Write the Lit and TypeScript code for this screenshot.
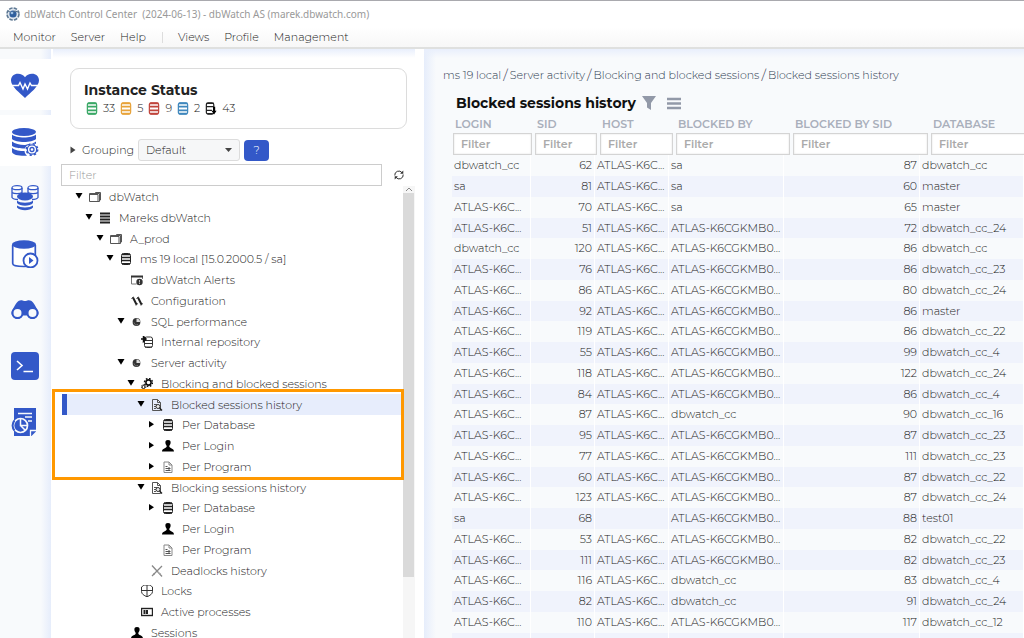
import { LitElement, html, css, svg, nothing } from "lit";
import { customElement, property } from "lit/decorators.js";
import { classMap } from "lit/directives/class-map.js";
import { styleMap } from "lit/directives/style-map.js";

type TreeNode = { depth: number; label: string; icon: string; open?: boolean; closed?: boolean; selected?: boolean };

const TREE: TreeNode[] = [
  { depth: 0, label: "dbWatch", icon: "folder", open: true },
  { depth: 1, label: "Mareks dbWatch", icon: "stack", open: true },
  { depth: 2, label: "A_prod", icon: "folder", open: true },
  { depth: 3, label: "ms 19 local [15.0.2000.5 / sa]", icon: "db", open: true },
  { depth: 4, label: "dbWatch Alerts", icon: "alert" },
  { depth: 4, label: "Configuration", icon: "tools" },
  { depth: 4, label: "SQL performance", icon: "dot", open: true },
  { depth: 5, label: "Internal repository", icon: "repo" },
  { depth: 4, label: "Server activity", icon: "dot", open: true },
  { depth: 5, label: "Blocking and blocked sessions", icon: "gears", open: true },
  { depth: 6, label: "Blocked sessions history", icon: "search", open: true, selected: true },
  { depth: 7, label: "Per Database", icon: "db", closed: true },
  { depth: 7, label: "Per Login", icon: "user", closed: true },
  { depth: 7, label: "Per Program", icon: "doc", closed: true },
  { depth: 6, label: "Blocking sessions history", icon: "search", open: true },
  { depth: 7, label: "Per Database", icon: "db", closed: true },
  { depth: 7, label: "Per Login", icon: "user" },
  { depth: 7, label: "Per Program", icon: "doc" },
  { depth: 6, label: "Deadlocks history", icon: "cross" },
  { depth: 5, label: "Locks", icon: "shield" },
  { depth: 5, label: "Active processes", icon: "process" },
  { depth: 4, label: "Sessions", icon: "user" },
];

const A = "ATLAS-K6C...";
const B = "ATLAS-K6CGKMB0...";
const COLUMNS = ["LOGIN", "SID", "HOST", "BLOCKED BY", "BLOCKED BY SID", "DATABASE"];
const ROWS: [string, number, string, string, number, string][] = [
  ["dbwatch_cc", 62, A, "sa", 87, "dbwatch_cc"],
  ["sa", 81, A, "sa", 60, "master"],
  [A, 70, A, "sa", 65, "master"],
  [A, 51, A, B, 72, "dbwatch_cc_24"],
  ["dbwatch_cc", 120, A, B, 86, "dbwatch_cc"],
  [A, 76, A, B, 86, "dbwatch_cc_23"],
  [A, 86, A, B, 80, "dbwatch_cc_24"],
  [A, 92, A, B, 86, "master"],
  [A, 119, A, B, 86, "dbwatch_cc_22"],
  [A, 55, A, B, 99, "dbwatch_cc_4"],
  [A, 118, A, B, 122, "dbwatch_cc_24"],
  [A, 84, A, B, 86, "dbwatch_cc_4"],
  [A, 87, A, "dbwatch_cc", 90, "dbwatch_cc_16"],
  [A, 95, A, B, 87, "dbwatch_cc_23"],
  [A, 77, A, B, 111, "dbwatch_cc_23"],
  [A, 60, A, B, 87, "dbwatch_cc_22"],
  [A, 123, A, B, 87, "dbwatch_cc_24"],
  ["sa", 68, "", B, 88, "test01"],
  [A, 53, A, B, 82, "dbwatch_cc_22"],
  [A, 111, A, B, 82, "dbwatch_cc_23"],
  [A, 116, A, "dbwatch_cc", 83, "dbwatch_cc_4"],
  [A, 82, A, "dbwatch_cc", 91, "dbwatch_cc_24"],
  [A, 110, A, B, 117, "dbwatch_cc_12"],
];

const STATUS: [string, string, string][] = [
  ["Healthy", "#3aa866", "33"],
  ["Warning", "#e8a33a", "5"],
  ["Alarm", "#c0453c", "9"],
  ["Information", "#3f87bd", "2"],
];

/* Small tree glyphs, drawn on a 12 x 12 grid. */
const GLYPHS: Record<string, unknown> = {
  folder: svg`<path d="M.5 2.500h10v8h-10z M.5 3.500h8.500v7 M6.500 2.500v-1h5v7.500h-1" fill="none" stroke="#555"/>`,
  stack: svg`<path d="M1 1.500h10M1 4.500h10M1 7.500h10M1 10.500h10" stroke="#222" stroke-width="2"/>`,
  db: svg`<rect x="1.500" y=".5" width="9" height="11" rx="2" fill="#fff" stroke="#222"/><path d="M2 1.500h8M1.500 4.500h9M1.500 7.500h9M2 10.700h8" stroke="#222" stroke-width="1.400"/>`,
  alert: svg`<path d="M.5 10V2.500h11V5M.5 10h5" fill="none" stroke="#777"/><path d="M0 2.500h12" stroke="#333" stroke-width="2"/><circle cx="8.500" cy="8" r="3.200" fill="#333"/><path d="M8.500 6v2.500M8.500 9v1" stroke="#bbb"/>`,
  tools: svg`<path d="M2 2.500l3.500 7M7 2.500l3.500 7" stroke="#222" stroke-width="2"/><path d="M.5 3.500l2-1.500M5.500 3.500l2-1.500M5 10.500l1.500-2M10 10.500l1.500-2" stroke="#222"/>`,
  dot: svg`<circle cx="5.500" cy="6" r="3.900" fill="#333"/><path d="M5.500 6V2.500A3.500 3.500 0 0 1 9 6z" fill="#ddd"/><path d="M3 6.500a3 3 0 0 0 4 2" fill="none" stroke="#777"/>`,
  repo: svg`<rect x="3.500" y="1" width="8" height="10.500" rx="2" fill="#fff" stroke="#333"/><path d="M4 4.500h7M4 7.500h7M4 11h7" stroke="#333"/><path d="M0 3h4M2.500 .5L5 3 2.500 5.500z" fill="#111" stroke="#111" stroke-width="1.500"/>`,
  gears: svg`<circle cx="7.500" cy="4.500" r="2.600" fill="none" stroke="#111" stroke-width="1.600"/><circle cx="7.500" cy="4.500" r="4" fill="none" stroke="#111" stroke-width="1.500" stroke-dasharray="1.600 1.540"/><circle cx="2.500" cy="9" r="1.500" fill="#fff" stroke="#222"/><circle cx="2.500" cy="9" r="2.300" fill="none" stroke="#222" stroke-dasharray="1 .8"/>`,
  search: svg`<path d="M1.500 .5h5l3 3v8h-8zM6.500 .5v3h3M3 5.500h3M3 7.500h2M3 9.500h2" fill="none" stroke="#555"/><circle cx="7" cy="7.500" r="2" fill="#eee" stroke="#333"/><path d="M8.500 9l2.500 2.500" stroke="#222" stroke-width="1.500"/>`,
  user: svg`<path d="M6 0a2.600 2.600 0 0 1 2.600 2.800C8.600 4.600 7.300 5.300 7.300 6.500c0 1.800 4.700 1.700 4.700 5H0c0-3.300 4.700-3.200 4.700-5C4.700 5.300 3.400 4.600 3.400 2.800A2.600 2.600 0 0 1 6 0z" fill="#000"/>`,
  doc: svg`<path d="M2 1h5l3 3v7.500H2zM7 1v3h3" fill="none" stroke="#888"/><path d="M3.500 5.500h2M3.500 7.500h5M3.500 9.500h5M7 6v4" stroke="#555"/>`,
  cross: svg`<path d="M1 .5l10 11M11 1L1 11" stroke="#888" stroke-width="1.300"/><path d="M2 8l2 2M7 7.500l3 1.500" stroke="#aaa"/>`,
  shield: svg`<path d="M2.500 0h7c.2 1 .8 1.500 2 2v4.500c0 2.500-2.500 4-5.500 5.300C3 10.500.5 9 .5 6.500V2c1.200-.5 1.800-1 2-2zM6 0v12M.5 5.500h11" fill="none" stroke="#333"/>`,
  process: svg`<rect x=".5" y="2.500" width="11" height="7" fill="#fff" stroke="#222" stroke-width="1.400"/><path d="M2.500 6h5" stroke="#222" stroke-width="4" stroke-dasharray="2 .5"/>`,
};

const glyph = (name: string) => html`<svg class="glyph" viewBox="0 0 12 12" aria-hidden="true">${GLYPHS[name]}</svg>`;

const barrel = (color: string) => html`<svg class="barrel" viewBox="0 0 12 14" aria-hidden="true">
  <rect x="1" y="1" width="10" height="12" rx="2" fill="#fff" stroke=${color} stroke-width="1.300"/>
  <path d="M1.500 1.500h9M1 5h10M1 9h10M1.500 12.500h9" stroke=${color} stroke-width="1.800"/></svg>`;

/* Navigation rail pictures, drawn on a 28 x 28 grid. */
const NAV: { label: string; active?: boolean; art: unknown }[] = [
  {
    label: "Health",
    active: true,
    art: svg`<path d="M14 26C9 21 0 14.500 0 8.500 0 4.500 3 1.800 7 1.800c3 0 5.500 1.200 7 3.400 1.500-2.200 4-3.400 7-3.400 4 0 7 2.700 7 6.700C28 14.500 19 21 14 26z" fill="#3358c8"/><path d="M0 13.500h7.500l1.500-3 3 6.500 2-5 2.500 5 2.500-6 1.500 2.500H28" fill="none" stroke="#fff" stroke-width="1.400"/>`,
  },
  {
    label: "Instances",
    active: true,
    art: svg`<ellipse cx="13" cy="4" rx="12" ry="4" fill="#3358c8"/><path d="M1 6.500c4 4 20 4 24 0v4.500c-4 4-20 4-24 0zM1 13.500c4 3.500 13 4 18 2.800-3 1-4.500 2.500-5 4.200C8.500 20.500 3 19.500 1 17.700zM1 20c3 2.500 8 3 12.500 3 .2 2 1.200 3.500 2.500 4.700C10 28 1 27.500 1 23.500z" fill="#3358c8"/><path d="M15 16.500c5 0 8.500-1.500 10-3v2.500c-3-.8-6-.5-8 1.500z" fill="#3358c8"/><circle cx="21" cy="21.500" r="4.700" fill="#fff" stroke="#3358c8" stroke-width="1.300"/><circle cx="21" cy="21.500" r="5.700" fill="none" stroke="#3358c8" stroke-width="1.500" stroke-dasharray="2.200 2.270"/><circle cx="21" cy="21.500" r="2" fill="none" stroke="#3358c8" stroke-width="1.300"/>`,
  },
  {
    label: "Clusters",
    art: svg`<path d="M1 4v9.500c1 1.500 4 2 6 2M27 4v9.500c-1 1.500-4 2-6 2M1 8.500c2 1.500 8 1.500 10 0V4M17 4v4.500c2 1.500 8 1.500 10 0" fill="none" stroke="#3358c8" stroke-width="1.300"/><ellipse cx="6" cy="3.700" rx="5" ry="2" fill="#fff" stroke="#3358c8" stroke-width="1.300"/><ellipse cx="22" cy="3.700" rx="5" ry="2" fill="#fff" stroke="#3358c8" stroke-width="1.300"/><ellipse cx="14" cy="12.500" rx="8" ry="4" fill="#3358c8"/><path d="M6 16.500c3 3 13 3 16 0v2.500c-3 3.500-13 3.500-16 0zM6 21.500c3 2.500 13 2.500 16 0v2c-3 3.500-13 3.500-16 0z" fill="#3358c8"/>`,
  },
  {
    label: "Jobs",
    art: svg`<path d="M1.700 5v18.500c0 4 22.600 4 22.600 0V5" fill="#fff" stroke="#3358c8" stroke-width="1.700"/><ellipse cx="13" cy="4.500" rx="12" ry="4.200" fill="#3358c8"/><circle cx="19.500" cy="20.500" r="7" fill="#fff" stroke="#3358c8" stroke-width="1.800"/><path d="M18 17l4.500 3.500L18 24z" fill="#3358c8"/>`,
  },
  {
    label: "Explore",
    art: svg`<path d="M9 4.500c3-1 3 .5 5 .5s2-1.500 5-.5c3 .5 5 5 8 10a6 6 0 0 1-11 5h-4a6 6 0 0 1-11-5C4 9.500 6 5 9 4.500z" fill="#3358c8"/><circle cx="6.500" cy="17" r="5" fill="#f8fafc" stroke="#3358c8" stroke-width="2"/><circle cx="21.500" cy="17" r="5" fill="#f8fafc" stroke="#3358c8" stroke-width="2"/>`,
  },
  {
    label: "SQL worksheet",
    art: svg`<rect width="28" height="28" rx="4" fill="#3358c8"/><path d="M6 9l5 4.500L6 18M12.500 19.500H22" fill="none" stroke="#fff" stroke-width="1.600"/>`,
  },
  {
    label: "Reports",
    art: svg`<path d="M3 0h22v28H3z" fill="#3358c8"/><path d="M19.500 28v-5.500H25" fill="none" stroke="#f8fafc" stroke-width="1.300"/><path d="M20.500 28L25 23.500V28z" fill="#f8fafc"/><path d="M7 5.500h14M14 9h7M17 13h4" stroke="#f8fafc" stroke-width="1.600"/><circle cx="9.500" cy="17.500" r="7" fill="#3358c8" stroke="#f8fafc" stroke-width="1.700"/><path d="M3.500 12.500a7.500 7.500 0 0 0 0 10" fill="none" stroke="#3358c8" stroke-width="2"/><path d="M9.500 10.500v7h7M9.500 17.500l5 5" fill="none" stroke="#f8fafc" stroke-width="1.500"/>`,
  },
];

/* Rows run 21, 21, 21, 20 pixels high. */
const isShort = (index: number) => index % 4 === 3;

@customElement("instance-tree")
class InstanceTree extends LitElement {
  @property({ attribute: false }) nodes: TreeNode[] = [];

  static styles = css`
    :host { display: block; position: relative; min-width: 0; }
    .list { margin: 0; padding: 0; list-style: none; }
    .row { display: flex; align-items: center; height: 21px; margin-left: 9px; white-space: nowrap; }
    .short { height: 20px; }
    .selected { background: #e7edfc; border-left: 5px solid #3358c8; margin-right: 2px; }
    .selected .indent { margin-left: -5px; }
    .indent { display: flex; flex: none; align-items: center; padding-left: 13px; }
    .arrow { width: 8px; height: 8px; margin-right: 6px; flex: none; }
    .glyph { width: 12px; height: 12px; margin-right: 8px; flex: none; }
    .mark { position: absolute; left: -1px; right: -1px; top: 203px; height: 85px; border: 3px solid #ff9800; pointer-events: none; }
  `;

  render() {
    return html`
      <ul class="list" role="tree">
        ${this.nodes.map(
          (n, i) => html`<li role="treeitem" aria-level=${n.depth + 1} class=${classMap({ row: true, short: isShort(i), selected: !!n.selected })}>
            <span class="indent" style=${styleMap({ width: `${Math.round(n.depth * 10.4) + 34}px` })}>
              <svg class="arrow" viewBox="0 0 8 8" aria-hidden="true" style=${styleMap({ marginLeft: `${Math.round(n.depth * 10.4)}px` })}>
                ${n.open ? svg`<path d="M.5 0h7L4 5.800z"/>` : n.closed ? svg`<path d="M1 0v6.500L6 3.200z"/>` : nothing}
              </svg>
              ${glyph(n.icon)}
            </span>
            <span>${n.label}</span>
          </li>`
        )}
      </ul>
      <div class="mark"></div>
    `;
  }
}

@customElement("session-table")
class SessionTable extends LitElement {
  static styles = css`
    :host { display: block; }
    .table { display: block; }
    .group { display: block; }
    .line { display: grid; grid-template-columns: 79px 64px 74px 115px 136px minmax(103px, 1fr); height: 21px; color: #222; }
    .short { height: 20px; }
    .line:nth-child(even) { background: #f0f3fc; }
    .head { display: grid; grid-template-columns: 82px 65px 76px 117px 138px minmax(110px, 1fr); padding-left: 1px; }
    .title { padding: 0 2px; text-align: left; font-size: 11px; line-height: 17px; color: #a9afbb; font-weight: 600; white-space: nowrap; }
    .slot { padding: 0 3px 0 0; display: flex; }
    .filter { box-sizing: border-box; width: 100%; min-width: 0; height: 22px; border: 1px solid #d4d4d4; box-shadow: inset 0 0 2px #ddd; background: #fff; padding: 0 7px; font: 600 11px "Montserrat", "Inter", sans-serif; color: #444; }
    .filter::placeholder { color: #aaa; opacity: 1; }
    .cell { padding: 0 2px; line-height: 20px; border-right: 1px solid #fff; white-space: nowrap; overflow: hidden; }
    .number { text-align: right; padding-right: 2px; }
  `;

  render() {
    return html`<table class="table">
      <thead class="group">
        <tr class="head">${COLUMNS.map((c) => html`<th class="title" scope="col">${c}</th>`)}</tr>
        <tr class="head">${COLUMNS.map((c) => html`<td class="slot"><input class="filter" type="text" placeholder="Filter" aria-label=${c} /></td>`)}</tr>
      </thead>
      <tbody class="group">
        ${ROWS.map(
          (r, i) => html`<tr class=${classMap({ line: true, short: isShort(i) })}>
            ${r.map((v) => html`<td class=${classMap({ cell: true, number: typeof v === "number" })}>${v}</td>`)}
          </tr>`
        )}
        <tr class="line">${COLUMNS.map(() => html`<td class="cell"></td>`)}</tr>
      </tbody>
    </table>`;
  }
}

@customElement("app-root")
class AppRoot extends LitElement {
  static styles = css`
    :host { display: flex; flex-direction: column; box-sizing: border-box; height: 100vh; overflow: hidden; border-top: 1px solid #a9a9ae; background: #fff; font: 300 11px "Montserrat", "Inter", sans-serif; color: #222; }
    .titlebar { display: flex; align-items: center; gap: 4px; height: 26px; padding: 0 6px; flex: none; font: 10px "Noto Sans", sans-serif; color: #999; white-space: pre; }
    .logo { width: 14px; height: 14px; }
    .menubar { display: flex; align-items: center; gap: 15px; height: 20px; padding: 0 13px; flex: none; background: linear-gradient(#fff, #f7f7f7); border-bottom: 2px solid #dfe0df; }
    .menu { color: #222; text-decoration: none; }
    .divider { width: 1px; height: 11px; margin-left: 1px; background: #ddd; }
    .body { display: flex; flex: 1; min-height: 0; }
    .rail { display: flex; flex-direction: column; gap: 5px; width: 51px; flex: none; padding-top: 10px; background: linear-gradient(90deg, #f8fafc 80%, #e6edfb); }
    .tab { display: flex; align-items: center; justify-content: center; box-sizing: border-box; width: 51px; height: 51px; border: 0; padding: 2px 1px 0 0; background: none; }
    .active { background: #fff; }
    .picture { width: 28px; height: 28px; }
    .side { display: flex; flex-direction: column; width: 362px; flex: none; margin: 0 9px 0 2px; background: linear-gradient(#e9effc, #fff 9px); }
    .card { box-sizing: border-box; height: 61px; margin: 19px 8px 0 17px; padding: 12px 13px 0; border: 1px solid #dcdcdc; border-radius: 9px; flex: none; background: #fff; }
    .cardtitle { margin: 0; font-size: 14px; line-height: 18px; font-weight: 700; color: #222; }
    .counts { display: flex; align-items: center; gap: 5px; line-height: 18px; padding-left: 2px; }
    .count { display: flex; align-items: center; gap: 5px; }
    .barrel { width: 12px; height: 13px; }
    .grouping { display: flex; align-items: center; height: 22px; margin: 10px 0 0 17px; flex: none; }
    .toggle { display: flex; align-items: center; gap: 6px; width: 68px; flex: none; border: 0; padding: 0; background: none; font: inherit; color: inherit; }
    .caret { width: 6px; height: 8px; }
    .choice { display: grid; width: 102px; margin-right: 4px; align-items: center; }
    .select { grid-area: 1 / 1; appearance: none; box-sizing: border-box; width: 100%; height: 22px; border: 1px solid #dcdcdc; border-radius: 3px; background: #f6f7f8; padding: 0 7px; font: inherit; color: #222; }
    .drop { grid-area: 1 / 1; justify-self: end; width: 7px; height: 4px; margin-right: 8px; pointer-events: none; }
    .help { width: 25px; height: 21px; border: 0; border-radius: 4px; padding: 0; background: #3358c8; color: #fff; font: inherit; }
    .search { display: flex; align-items: center; gap: 11px; margin: 3px 10px 0 8px; flex: none; }
    .searchbox { box-sizing: border-box; flex: 1; min-width: 0; height: 22px; border: 1px solid #ccc; padding: 0 7px; font: inherit; color: #444; }
    .searchbox::placeholder { color: #999; opacity: 1; }
    .refresh { display: flex; width: 12px; height: 12px; border: 0; padding: 0; background: none; }
    .treearea { display: flex; flex: 1; min-height: 0; }
    .tree { flex: 1; }
    .scroll { display: flex; flex-direction: column; width: 12px; flex: none; background: #f6f6f6; }
    .up { width: 12px; height: 7px; }
    .thumb { height: 85%; background: #dadada; margin-right: 1px; }
    .main { flex: 1; min-width: 0; overflow: hidden; background: linear-gradient(#e9effc, #e9effc00 9px), linear-gradient(90deg, #e6edfb, #f8fafc 12px); }
    .crumbs { display: flex; gap: 2px; padding: 16px 18px 0 19px; line-height: 20px; white-space: nowrap; }
    .crumb { color: #2d3a50; text-decoration: none; }
    .slash { font-size: 14px; color: #445; }
    .heading { display: flex; align-items: center; gap: 6px; height: 20px; padding: 8px 0 0 32px; }
    .name { margin: 0; font-size: 14px; line-height: 20px; font-weight: 700; color: #111; white-space: nowrap; }
    .tool { display: flex; border: 0; padding: 0; margin-right: 5px; background: none; }
    .toolart { width: 14px; height: 14px; }
    .sessions { margin: 3px 0 0 28px; }
  `;

  private picture(art: unknown) {
    return html`<svg class="picture" viewBox="0 0 28 28" aria-hidden="true">${art}</svg>`;
  }

  render() {
    return html`
      <header class="titlebar">
        <svg class="logo" viewBox="0 0 14 14" aria-hidden="true">
          <circle cx="7" cy="7" r="6" fill="#dfe6ee" stroke="#5d7893" stroke-width="1.600" stroke-dasharray="3.500 1.210"/>
          <circle cx="7" cy="7" r="3.600" fill="#2f5f9e"/><path d="M2 4l4 2 3-2 3 1" stroke="#54708c" fill="none"/><circle cx="6" cy="6" r="1.300" fill="#9cc0e4"/>
        </svg><span>dbWatch Control Center  (2024-06-13) - dbWatch AS (marek.dbwatch.com)</span>
      </header>
      <nav class="menubar" aria-label="Menu">
        ${["Monitor", "Server", "Help"].map((m) => html`<a class="menu" href="#">${m}</a>`)}
        <span class="divider"></span>
        ${["Views", "Profile", "Management"].map((m) => html`<a class="menu" href="#">${m}</a>`)}
      </nav>
      <div class="body">
        <nav class="rail" aria-label="Modules">
          ${NAV.map((n) => html`<button class=${classMap({ tab: true, active: !!n.active })} aria-label=${n.label}>${this.picture(n.art)}</button>`)}
        </nav>
        <aside class="side">
          <section class="card">
            <h2 class="cardtitle">Instance Status</h2>
            <div class="counts">
              ${STATUS.map(([label, color, n]) => html`<span class="count" title=${label}>${barrel(color)}${n}</span>`)}
              <span class="count">
                <svg class="barrel" viewBox="0 0 12 14" aria-hidden="true"><rect x="1" y="1" width="8" height="12" rx="2" fill="#fff" stroke="#222" stroke-width="1.300"/><path d="M1 1.500h8M1 5h8M1 9h6M2 12.500h6" stroke="#222" stroke-width="1.400"/><path d="M8.200 5h2.300v4.500H12L9.300 13.500 6.500 9.500h1.700z" fill="#000"/></svg>43
              </span>
            </div>
          </section>
          <div class="grouping">
            <button class="toggle"><svg class="caret" viewBox="0 0 6 8" aria-hidden="true"><path d="M.5 .5v7L5.500 4z" fill="#444"/></svg>Grouping</button>
            <div class="choice">
              <select class="select" aria-label="Grouping"><option>Default</option></select>
              <svg class="drop" viewBox="0 0 7 4" aria-hidden="true"><path d="M0 0h7L3.500 4z" fill="#444"/></svg>
            </div>
            <button class="help" aria-label="Help">?</button>
          </div>
          <div class="search">
            <input class="searchbox" type="text" placeholder="Filter" aria-label="Filter instances" />
            <button class="refresh" aria-label="Refresh">
              <svg width="12" height="12" viewBox="0 0 12 12" aria-hidden="true"><path d="M1.800 6.500A4 4 0 0 1 9 3.700M10.200 5.500A4 4 0 0 1 3 8.300" fill="none" stroke="#333"/><path d="M10.300 1.500v3.200H7.100zM1.700 10.500V7.300h3.200z" fill="#333"/></svg>
            </button>
          </div>
          <div class="treearea">
            <instance-tree class="tree" .nodes=${TREE}></instance-tree>
            <div class="scroll" aria-hidden="true">
              <svg class="up" viewBox="0 0 12 7"><path d="M3 5l3-3 3 3" fill="none" stroke="#888"/></svg>
              <div class="thumb"></div>
            </div>
          </div>
        </aside>
        <main class="main">
          <nav class="crumbs" aria-label="Breadcrumb">
            <a class="crumb" href="#">ms 19 local</a><span class="slash">/</span>
            <a class="crumb" href="#">Server activity</a><span class="slash">/</span>
            <a class="crumb" href="#">Blocking and blocked sessions</a><span class="slash">/</span>
            <a class="crumb" href="#">Blocked sessions history</a>
          </nav>
          <div class="heading">
            <h1 class="name">Blocked sessions history</h1>
            <button class="tool" aria-label="Filter"><svg class="toolart" viewBox="0 0 14 14"><path d="M0 0h14L9 7v7L5 11.500V7z" fill="#9299a8"/></svg></button>
            <button class="tool" aria-label="Options"><svg class="toolart" viewBox="0 0 14 14"><path d="M0 3h14M0 7.500h14M0 12h14" stroke="#9299a8" stroke-width="2.400"/></svg></button>
          </div>
          <session-table class="sessions"></session-table>
        </main>
      </div>
    `;
  }
}
